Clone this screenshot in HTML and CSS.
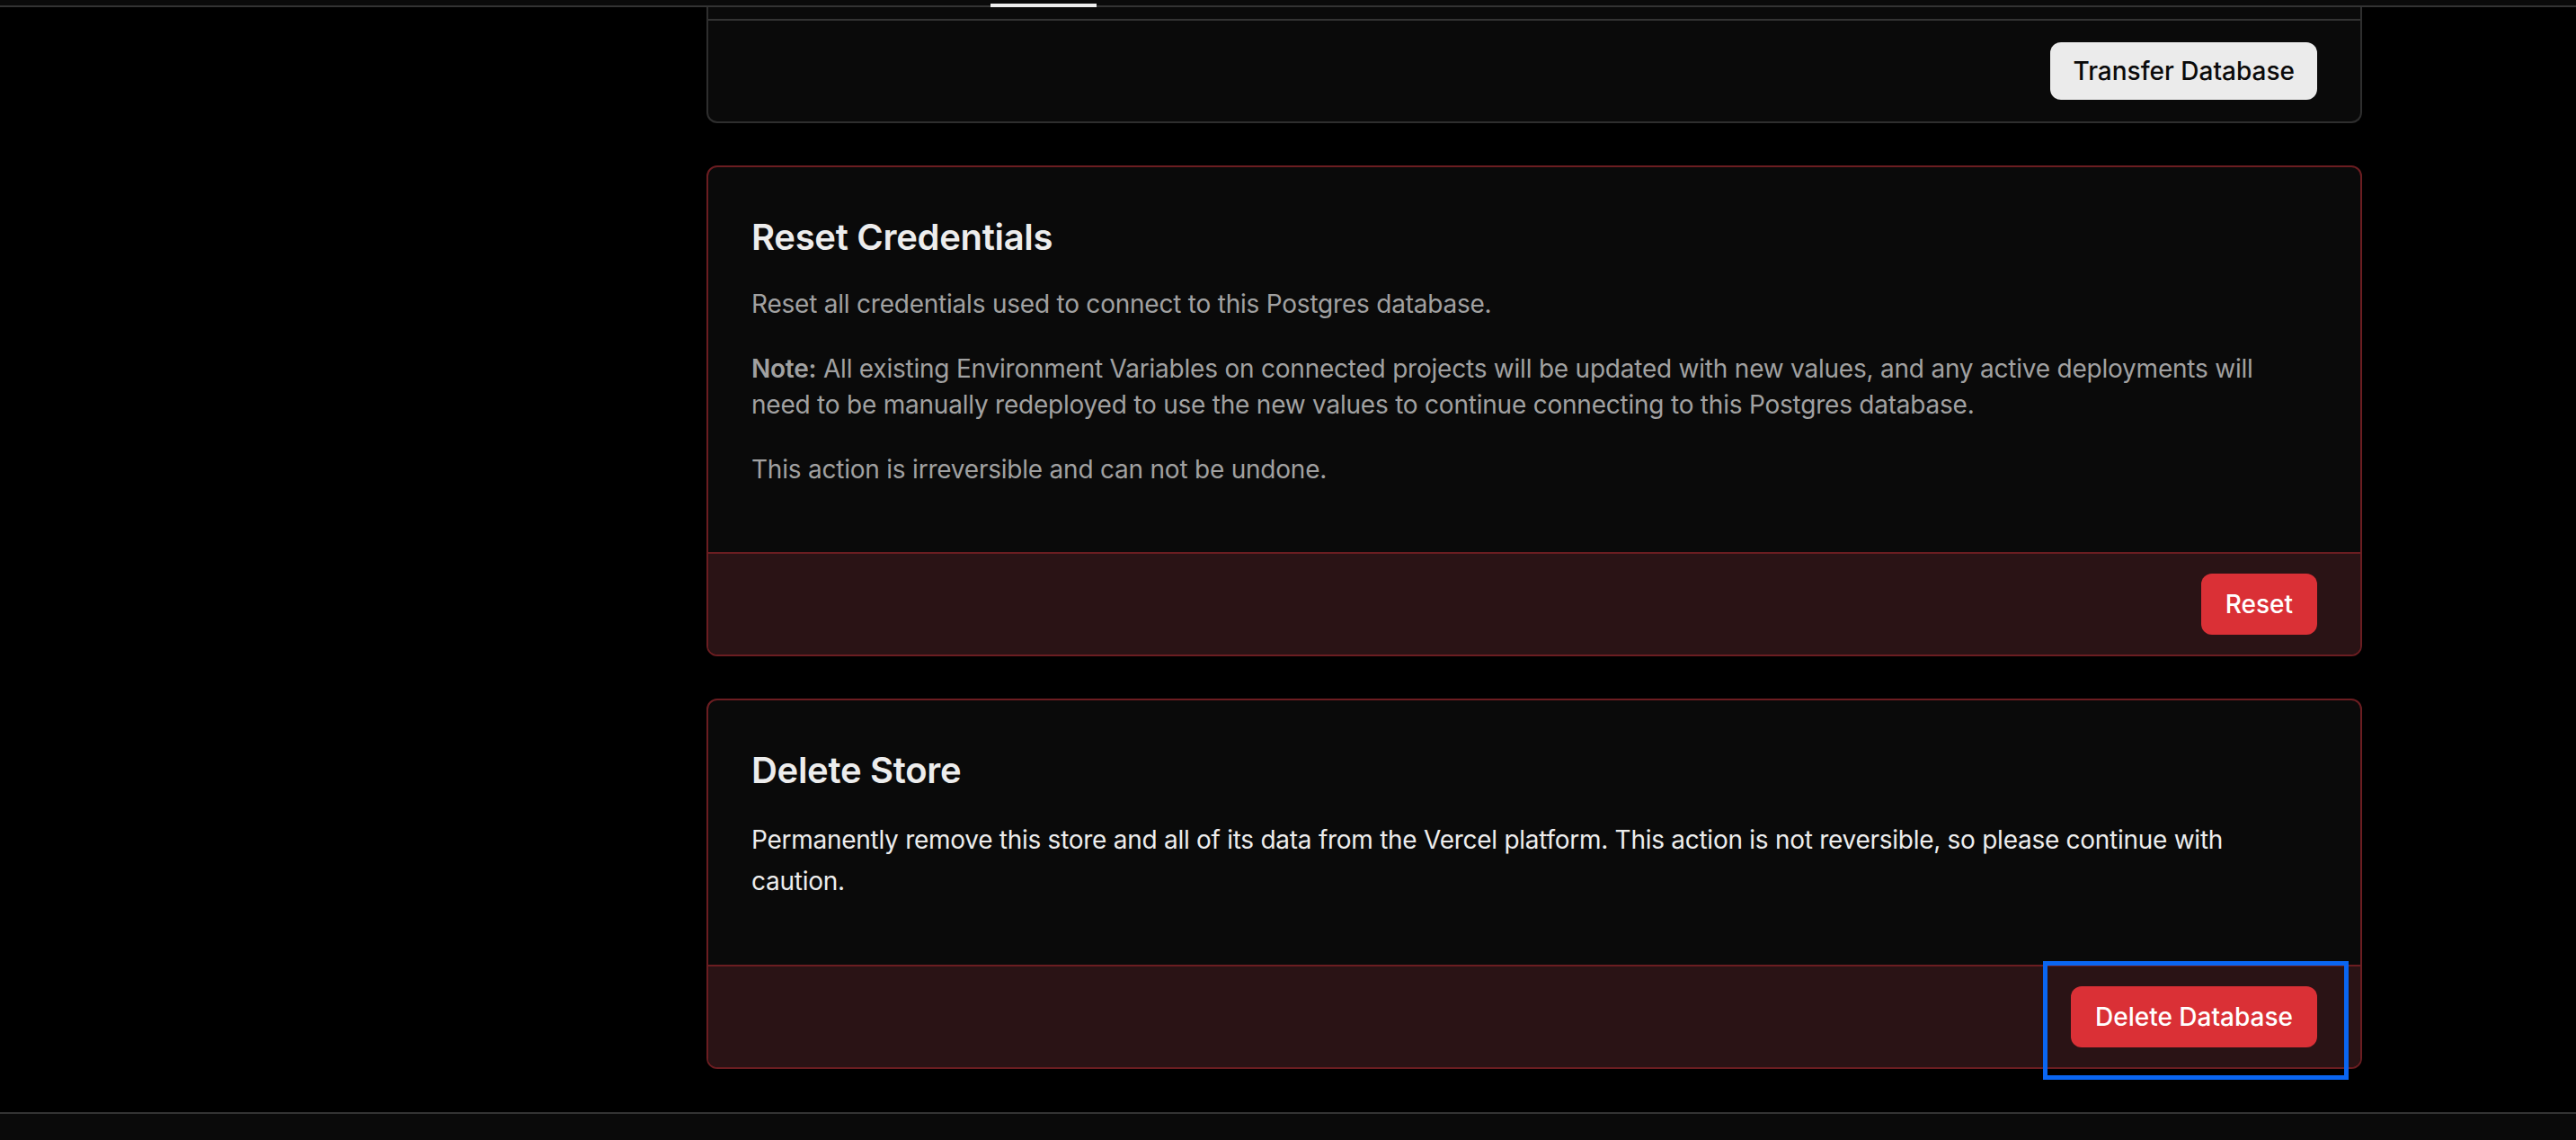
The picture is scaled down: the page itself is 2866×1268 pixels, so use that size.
FILE: index.html
```html
<!DOCTYPE html>
<html lang="en">
<head>
<meta charset="utf-8">
<title>Store Settings</title>
<link rel="stylesheet" href="styles.css">
</head>
<body>
<header class="topbar">
  <div class="tab-indicator"></div>
</header>
<div class="layout">
  <aside class="sidebar"></aside>
  <main class="content">
    <section class="card card--cut">
      <div class="card-body card-body--cut"></div>
      <div class="card-footer">
        <button class="btn btn--light">Transfer Database</button>
      </div>
    </section>

    <section class="card card--danger card--reset">
      <div class="card-body card-body--reset">
        <h2 class="card-title">Reset Credentials</h2>
        <p class="card-text muted">Reset all credentials used to connect to this Postgres database.</p>
        <p class="card-text muted"><strong>Note:</strong> All existing Environment Variables on connected projects will be updated with new values, and any active deployments will need to be manually redeployed to use the new values to continue connecting to this Postgres database.</p>
        <p class="card-text muted">This action is irreversible and can not be undone.</p>
      </div>
      <div class="card-footer card-footer--danger">
        <button class="btn btn--danger">Reset</button>
      </div>
    </section>

    <section class="card card--danger card--delete">
      <div class="card-body card-body--delete">
        <h2 class="card-title">Delete Store</h2>
        <p class="card-text card-text--tall">Permanently remove this store and all of its data from the Vercel platform. This action is not reversible, so please continue with caution.</p>
      </div>
      <div class="card-footer card-footer--danger">
        <div class="highlight-wrap">
          <button class="btn btn--danger">Delete Database</button>
          <div class="highlight"></div>
        </div>
      </div>
    </section>
  </main>
</div>
<footer class="bottombar"></footer>
</body>
</html>
```

FILE: styles.css
```css
* { box-sizing: border-box; }

html, body {
  margin: 0;
  padding: 0;
  background: #000;
  height: 100%;
  overflow: hidden;
}

body {
  font-family: Inter, "Noto Sans", "Liberation Sans", sans-serif;
  color: #ededed;
}

.topbar {
  height: 8px;
  background: #0a0a0a;
  border-bottom: 2px solid #333333;
  display: flex;
  align-items: flex-end;
  padding-left: 1102px;
}

.tab-indicator {
  width: 118px;
  height: 4px;
  background: #ededed;
  margin-bottom: -2px;
}

.layout {
  display: grid;
  grid-template-columns: 786px 1842px;
}

.content {
  display: flex;
  flex-direction: column;
  gap: 47px;
}

.card {
  background: #0a0a0a;
  border: 2px solid #2e2e2e;
  border-radius: 12px;
}

.card--cut {
  border-top: none;
  border-top-left-radius: 0;
  border-top-right-radius: 0;
}

.card-body--cut {
  height: 13px;
}

.card-footer {
  display: flex;
  justify-content: flex-end;
  align-items: center;
  height: 114px;
  padding: 0 48px;
  border-top: 2px solid #333333;
  border-bottom-left-radius: 10px;
  border-bottom-right-radius: 10px;
}

.card--danger {
  border-color: #6b1d21;
}

.card-footer--danger {
  background: #2a1315;
  border-top-color: #6b1d21;
}

.card-body--reset {
  padding: 48px 48px 72px;
}

.card-body--delete {
  padding: 48px 48px 70px;
}

.card-title {
  margin: 0 0 24px;
  font-size: 40px;
  line-height: 60px;
  font-weight: 600;
  letter-spacing: -0.3px;
  color: #ededed;
}

.card-text {
  margin: 0;
  font-size: 28px;
  line-height: 40px;
  letter-spacing: -0.22px;
  color: #ededed;
}

.card-text + .card-text {
  margin-top: 32px;
}

.card-text--tall {
  line-height: 46px;
  letter-spacing: -0.27px;
}

.muted {
  color: #a1a1a1;
}

.muted strong {
  font-weight: 600;
}

.btn {
  font-family: inherit;
  font-size: 28px;
  font-weight: 500;
  border: none;
  border-radius: 12px;
  cursor: pointer;
  display: flex;
  align-items: center;
}

.btn--light {
  height: 64px;
  background: #ebebeb;
  color: #0a0a0a;
  padding: 0 25px;
}

.btn--danger {
  height: 68px;
  background: #da3036;
  color: #ffffff;
  padding: 0 27px;
}

.highlight-wrap {
  position: relative;
}

.highlight {
  position: absolute;
  top: -28px;
  left: -31px;
  right: -35px;
  bottom: -36px;
  border: 5px solid #0a66f2;
  pointer-events: none;
}

.bottombar {
  position: fixed;
  left: 0;
  right: 0;
  bottom: 0;
  height: 31px;
  background: #0a0a0a;
  border-top: 2px solid #333333;
}
```
